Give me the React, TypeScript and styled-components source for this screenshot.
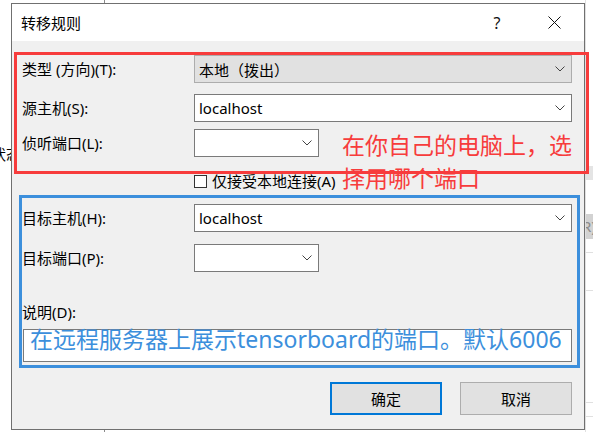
import styled, { createGlobalStyle } from "styled-components";

const GlobalStyle = createGlobalStyle`
  html, body { margin: 0; padding: 0; background: #fff; }
  body { font-family: "Noto Sans", "Noto Sans CJK SC", sans-serif; color: #000; }
`;

const Desktop = styled.div`
  position: relative;
  width: 593px;
  height: 432px;
  overflow: hidden;
  box-sizing: border-box;
  padding: 3px 0 0 11px;
  background: linear-gradient(to right, #fff 104px, #8a8a8a 104px, #8a8a8a 105px, #fff 105px);
`;

// bits of the app behind the dialog
const BehindText = styled.span`
  position: absolute;
  left: -9px;
  top: 143px;
  font-size: 15px;
`;

const BehindStrip = styled.div`
  position: absolute;
  left: 585px;
  top: 0;
  width: 8px;
  height: 432px;
  display: flex;
  flex-direction: column;
  padding-top: 166px;
  box-sizing: border-box;
  border-left: 1px solid #e0e0e0;
`;

const StripBand = styled.div<{ $h: number; $bg: string; $mt?: number }>`
  height: ${(p) => p.$h}px;
  background: ${(p) => p.$bg};
  margin-top: ${(p) => p.$mt ?? 0}px;
  font-size: 15px;
  color: #8c8c8c;
  line-height: ${(p) => p.$h}px;
  overflow: hidden;
  white-space: nowrap;
  text-indent: -4px;
`;

const Window = styled.div`
  position: relative;
  z-index: 1;
  width: 574px;
  height: 427px;
  box-sizing: border-box;
  border: 1px solid #707070;
  background: #f0f0f0;
  display: flex;
  flex-direction: column;
`;

const TitleBar = styled.div`
  height: 37px;
  background: #fff;
  display: flex;
  align-items: center;
  padding-left: 9px;
  font-size: 15px;
`;

const TitleText = styled.div`
  flex: 1;
`;

const TitleButton = styled.div<{ $w: number }>`
  width: ${(p) => p.$w}px;
  height: 37px;
  display: flex;
  align-items: center;
  justify-content: center;
  font-size: 16px;
  color: #111;
`;

const Body = styled.div`
  flex: 1;
  display: flex;
  flex-direction: column;
  padding: 14px 12px 0 10px;
`;

const FieldRow = styled.div<{ $mt: number }>`
  display: grid;
  grid-template-columns: 172px 1fr;
  align-items: center;
  margin-top: ${(p) => p.$mt}px;
`;

const Label = styled.div`
  font-size: 15px;
  line-height: 20px;
  white-space: nowrap;
`;

const Combo = styled.div<{ $width?: number; $disabled?: boolean }>`
  width: ${(p) => (p.$width ? `${p.$width}px` : "100%")};
  height: 28px;
  box-sizing: border-box;
  border: 1px solid ${(p) => (p.$disabled ? "#adadad" : "#7a7a7a")};
  background: ${(p) => (p.$disabled ? "#e1e1e1" : "#fff")};
  display: flex;
  align-items: center;
  justify-content: space-between;
  padding: 0 6px 0 4px;
  font-size: 15px;
`;

const CheckLine = styled.div`
  display: flex;
  align-items: center;
  gap: 5px;
  font-size: 15px;
  line-height: 13px;
`;

const CheckBox = styled.div`
  width: 13px;
  height: 13px;
  box-sizing: border-box;
  border: 1px solid #333;
  background: #fff;
`;

const NoteField = styled.div`
  margin: 7px 0 0 1px;
  height: 33px;
  box-sizing: border-box;
  border: 1px solid #7a7a7a;
  background: #fff;
`;

const ButtonRow = styled.div`
  display: flex;
  justify-content: flex-end;
  gap: 18px;
  margin-top: 20px;
`;

const DialogButton = styled.div<{ $primary?: boolean }>`
  width: 112px;
  height: 33px;
  box-sizing: border-box;
  border: ${(p) => (p.$primary ? "2px solid #0078d7" : "1px solid #adadad")};
  background: #e1e1e1;
  display: flex;
  align-items: center;
  justify-content: center;
  font-size: 15px;
`;

// annotation marks drawn over the screenshot
const MarkBox = styled.div<{ $color: string; $l: number; $t: number; $w: number; $h: number }>`
  position: absolute;
  z-index: 2;
  left: ${(p) => p.$l}px;
  top: ${(p) => p.$t}px;
  width: ${(p) => p.$w}px;
  height: ${(p) => p.$h}px;
  box-sizing: border-box;
  border: 3px solid ${(p) => p.$color};
  pointer-events: none;
`;

const MarkText = styled.div<{ $color: string; $l: number; $t: number }>`
  position: absolute;
  z-index: 3;
  left: ${(p) => p.$l}px;
  top: ${(p) => p.$t}px;
  color: ${(p) => p.$color};
  font-family: "Noto Sans", "Noto Sans CJK SC", sans-serif;
  font-size: 23px;
  line-height: 33px;
  white-space: nowrap;
`;

const Chevron = () => (
  <svg width="10" height="6" viewBox="0 0 10 6">
    <path d="M0.5 0.5 L5 5 L9.5 0.5" fill="none" stroke="#444" strokeWidth="1" />
  </svg>
);

const CloseIcon = () => (
  <svg width="13" height="13" viewBox="0 0 13 13">
    <path d="M0.5 0.5 L12.5 12.5 M12.5 0.5 L0.5 12.5" stroke="#111" strokeWidth="1" />
  </svg>
);

const App = () => {
  return (
    <>
      <GlobalStyle />
      <Desktop>
        <BehindText>状态</BehindText>
        <BehindStrip>
          <StripBand $h={14} $bg="#e4e4e4" />
          <StripBand $h={25} $bg="#d2d2d2" $mt={34}>R)</StripBand>
          <StripBand $h={1} $bg="#e0e0e0" $mt={13} />
          <StripBand $h={1} $bg="#e0e0e0" $mt={37} />
          <StripBand $h={1} $bg="#e0e0e0" $mt={111} />
          <StripBand $h={1} $bg="#e0e0e0" $mt={13} />
        </BehindStrip>

        <Window>
          <TitleBar>
            <TitleText>转移规则</TitleText>
            <TitleButton $w={54}>?</TitleButton>
            <TitleButton $w={60}>
              <CloseIcon />
            </TitleButton>
          </TitleBar>
          <Body>
            <FieldRow $mt={0}>
              <Label>类型 (方向)(T):</Label>
              <Combo $disabled>
                <span>本地（拨出）</span>
                <Chevron />
              </Combo>
            </FieldRow>
            <FieldRow $mt={11}>
              <Label>源主机(S):</Label>
              <Combo>
                <span>localhost</span>
                <Chevron />
              </Combo>
            </FieldRow>
            <FieldRow $mt={7}>
              <Label>侦听端口(L):</Label>
              <Combo $width={125}>
                <span />
                <Chevron />
              </Combo>
            </FieldRow>
            <FieldRow $mt={18}>
              <span />
              <CheckLine>
                <CheckBox />
                <span>仅接受本地连接(A)</span>
              </CheckLine>
            </FieldRow>
            <FieldRow $mt={16}>
              <Label>目标主机(H):</Label>
              <Combo>
                <span>localhost</span>
                <Chevron />
              </Combo>
            </FieldRow>
            <FieldRow $mt={12}>
              <Label>目标端口(P):</Label>
              <Combo $width={125}>
                <span />
                <Chevron />
              </Combo>
            </FieldRow>
            <FieldRow $mt={30}>
              <Label>说明(D):</Label>
            </FieldRow>
            <NoteField />
            <ButtonRow>
              <DialogButton $primary>确定</DialogButton>
              <DialogButton>取消</DialogButton>
            </ButtonRow>
          </Body>
        </Window>

        <MarkBox $color="#f73c3c" $l={14} $t={52} $w={575} $h={122} />
        <MarkText $color="#f73c3c" $l={342} $t={129}>
          在你自己的电脑上，选
          <br />
          择用哪个端口
        </MarkText>
        <MarkBox $color="#3c8fdc" $l={19} $t={195} $w={561} $h={173} />
        <MarkText $color="#3c8fdc" $l={30} $t={323}>
          在远程服务器上展示tensorboard的端口。默认6006
        </MarkText>
      </Desktop>
    </>
  );
};

export default App;
